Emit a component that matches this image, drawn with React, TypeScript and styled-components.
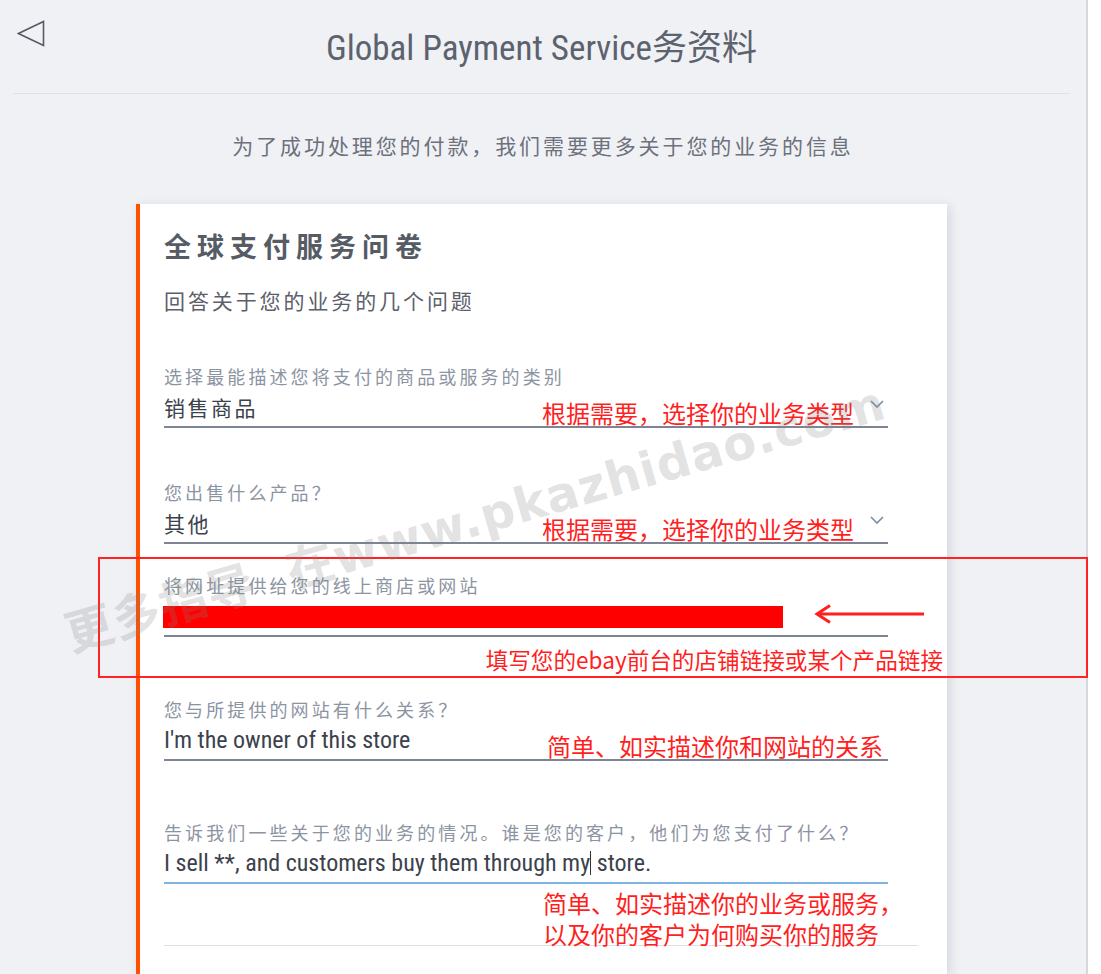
import React from "react";
import styled, { createGlobalStyle } from "styled-components";

const CJK = `"Noto Sans CJK SC", "Noto Sans", sans-serif`;
const NARROW = `"Liberation Sans Narrow", "Roboto Condensed", "Noto Sans CJK SC", sans-serif`;

const GlobalStyle = createGlobalStyle`
  *, *::before, *::after {
    box-sizing: border-box;
  }
  html, body {
    margin: 0;
    padding: 0;
    background: #ffffff;
    overflow: hidden;
  }
  body {
    font-family: ${CJK};
  }
`;

const Screen = styled.div`
  position: relative;
  width: 1101px;
  height: 974px;
  overflow: hidden;
  background: #ffffff;
`;

const Page = styled.div`
  display: flex;
  flex-direction: column;
  width: 1088px;
  height: 974px;
  background: #f0f1f5;
  border-right: 2px solid #d5d7dd;
`;

const Header = styled.header`
  display: grid;
  grid-template-columns: 60px 1fr 60px;
  height: 94px;
  margin: 0 16px 0 13px;
  border-bottom: 1px solid #dfe1e6;
`;

const BackButton = styled.button`
  align-self: start;
  margin: 20px 0 0 4px;
  padding: 0;
  width: 28px;
  height: 28px;
  border: none;
  background: none;
  cursor: pointer;
`;

const Title = styled.h1`
  margin: 4px 0 0;
  align-self: center;
  text-align: center;
  font-family: ${NARROW};
  font-weight: normal;
  font-size: 35px;
  line-height: 40px;
  color: #5c626e;
`;

const Subtitle = styled.p`
  margin: 35px 0 0;
  text-align: center;
  font-size: 21px;
  letter-spacing: 2.9px;
  line-height: 32px;
  color: #6c717c;
`;

const Card = styled.section`
  flex: 1;
  margin: 43px 0 0 136px;
  width: 811px;
  padding: 22px 59px 0 24px;
  background: #ffffff;
  border-left: 4px solid #ff5000;
  box-shadow: 3px 2px 10px rgba(40, 50, 70, 0.13);
`;

const CardTitle = styled.h2`
  margin: 0;
  font-size: 27px;
  line-height: 40px;
  letter-spacing: 6px;
  font-weight: bold;
  color: #565b64;
`;

const CardIntro = styled.p`
  margin: 19px 0 0;
  font-size: 21px;
  line-height: 30px;
  letter-spacing: 2.9px;
  color: #5b606a;
`;

const Field = styled.div<{ $gap: number }>`
  position: relative;
  margin-top: ${(p) => p.$gap}px;
`;

const Label = styled.label`
  display: block;
  font-size: 18px;
  line-height: 22px;
  letter-spacing: 3.1px;
  color: #8c94a2;
  white-space: nowrap;
`;

const ValueRow = styled.div<{ $focused?: boolean }>`
  display: flex;
  align-items: center;
  height: 41px;
  border-bottom: 2px solid ${(p) => (p.$focused ? "#80b4e0" : "#7d8594")};
`;

const Value = styled.span<{ $latin?: boolean }>`
  font-family: ${(p) => (p.$latin ? NARROW : CJK)};
  font-size: ${(p) => (p.$latin ? 24 : 21)}px;
  letter-spacing: ${(p) => (p.$latin ? 0 : 2.5)}px;
  line-height: 28px;
  color: #3c424c;
  white-space: pre;
`;

const Caret = styled.span`
  display: inline-block;
  width: 0;
  height: 24px;
  border-left: 1px solid #333;
  vertical-align: -4px;
`;

const Spacer = styled.div`
  flex: 1;
`;

const Note = styled.span`
  font-family: ${CJK};
  font-size: 24px;
  line-height: 30px;
  color: #ff1f1f;
  white-space: nowrap;
`;

const RowNote = styled(Note)<{ $pad: number }>`
  margin-top: 13px;
  padding-right: ${(p) => p.$pad}px;
`;

const Chevron = styled.svg`
  flex: none;
  width: 14px;
  height: 8px;
  margin: 0 4px 6px 0;
`;

const Redaction = styled.span`
  display: block;
  flex: none;
  width: 620px;
  height: 22px;
  margin: 3px 0 0 -1px;
  background: #ff0000;
`;

const Arrow = styled.svg`
  flex: none;
  width: 112px;
  height: 20px;
  margin: -4px 0 0 31px;
`;

const CalloutBox = styled.div`
  position: absolute;
  left: -66px;
  top: -17px;
  width: 990px;
  height: 121px;
  border: 2px solid #ff2323;
  pointer-events: none;
`;

const CalloutNote = styled(Note)`
  position: absolute;
  right: 143px;
  bottom: 1px;
  font-size: 22.6px;
`;

const TextArea = styled.div`
  height: 62px;
  margin-right: -30px;
  padding: 3px 0 0 379px;
  border-bottom: 1px solid #dde1e6;
`;

const StackNote = styled(Note)`
  display: block;
  line-height: 31px;
`;

const Watermark = styled.div`
  position: absolute;
  left: 50px;
  top: 490px;
  width: 840px;
  text-align: center;
  font-family: "DejaVu Sans", "Noto Sans CJK SC", sans-serif;
  font-weight: bold;
  font-size: 48px;
  line-height: 60px;
  letter-spacing: 1px;
  word-spacing: 16px;
  color: rgba(130, 130, 130, 0.24);
  transform: rotate(-16deg);
  white-space: nowrap;
  pointer-events: none;
`;

const ChevronIcon = () => (
  <Chevron viewBox="0 0 14 8">
    <path d="M1 1 L7 7 L13 1" fill="none" stroke="#7a8aa3" strokeWidth="1.6" />
  </Chevron>
);

export default function App() {
  return (
    <Screen>
      <GlobalStyle />
      <Page>
        <Header>
          <BackButton aria-label="back">
            <svg width="28" height="28" viewBox="0 0 28 28">
              <path
                d="M26.5 1.5 L1.5 13.5 L26.5 25.5 Z"
                fill="none"
                stroke="#555a66"
                strokeWidth="1.6"
                strokeLinejoin="miter"
              />
            </svg>
          </BackButton>
          <Title>Global Payment Service务资料</Title>
          <span />
        </Header>
        <Subtitle>为了成功处理您的付款，我们需要更多关于您的业务的信息</Subtitle>

        <Card>
          <CardTitle>全球支付服务问卷</CardTitle>
          <CardIntro>回答关于您的业务的几个问题</CardIntro>

          <Field $gap={50}>
            <Label>选择最能描述您将支付的商品或服务的类别</Label>
            <ValueRow>
              <Value>销售商品</Value>
              <Spacer />
              <RowNote $pad={16}>根据需要，选择你的业务类型</RowNote>
              <ChevronIcon />
            </ValueRow>
          </Field>

          <Field $gap={53}>
            <Label>您出售什么产品？</Label>
            <ValueRow>
              <Value>其他</Value>
              <Spacer />
              <RowNote $pad={16}>根据需要，选择你的业务类型</RowNote>
              <ChevronIcon />
            </ValueRow>
          </Field>

          <Field $gap={30}>
            <Label>将网址提供给您的线上商店或网站</Label>
            <ValueRow>
              <Redaction />
              <Arrow viewBox="0 0 112 20">
                <path d="M4 10 H110" stroke="#ff1f1f" strokeWidth="3" />
                <path
                  d="M16 1.5 L3 10 L16 18.5"
                  fill="none"
                  stroke="#ff1f1f"
                  strokeWidth="3"
                />
              </Arrow>
            </ValueRow>
            <CalloutBox>
              <CalloutNote>填写您的ebay前台的店铺链接或某个产品链接</CalloutNote>
            </CalloutBox>
          </Field>

          <Field $gap={61}>
            <Label>您与所提供的网站有什么关系？</Label>
            <ValueRow>
              <Value $latin>I'm the owner of this store</Value>
              <Spacer />
              <RowNote $pad={5}>简单、如实描述你和网站的关系</RowNote>
            </ValueRow>
          </Field>

          <Field $gap={60}>
            <Label>告诉我们一些关于您的业务的情况。谁是您的客户，他们为您支付了什么？</Label>
            <ValueRow $focused>
              <Value $latin>
                I sell **, and customers buy them through my
                <Caret /> store.
              </Value>
            </ValueRow>
            <TextArea>
              <StackNote>
                简单、如实描述你的业务或服务，
                <br />
                以及你的客户为何购买你的服务
              </StackNote>
            </TextArea>
          </Field>
        </Card>
      </Page>
      <Watermark>更多指导 在www.pkazhidao.com</Watermark>
    </Screen>
  );
}
